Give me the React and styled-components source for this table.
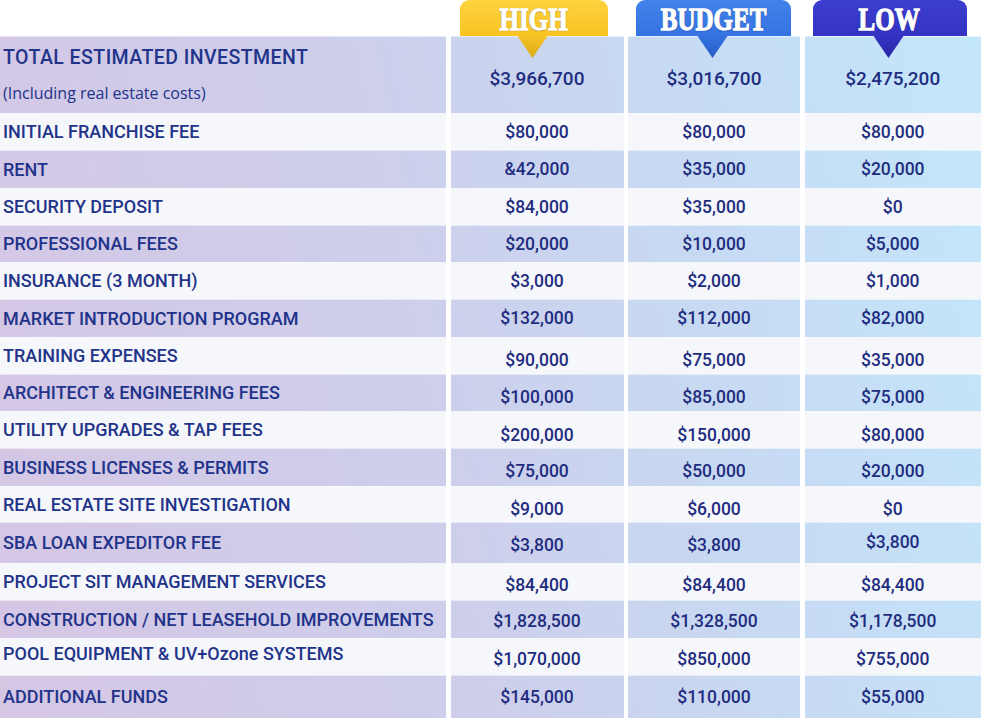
import React from 'react';
import styled, { createGlobalStyle, css } from 'styled-components';

const colors = {
  text: '#22338a',
  value: '#1f2d80',
  light: '#f6f7fa',
};

const columns = '446px 173px 172px 1fr';
const gutter = '4.5px';

const GlobalStyle = createGlobalStyle`
  html, body {
    margin: 0;
    padding: 0;
    background: #ffffff;
  }
  body {
    font-family: Roboto, "DejaVu Sans", sans-serif;
  }
`;

const shadedBg = css`
  background: linear-gradient(78deg, #d5c6e4 0%, #cdcfeb 45%, #c6dcf4 75%, #c3e7fb 100%) fixed;
`;

const Page = styled.div`
  width: 981px;
  height: 719px;
  overflow: hidden;
  background: #ffffff;
`;

const TabRow = styled.div`
  display: grid;
  grid-template-columns: ${columns};
  column-gap: ${gutter};
  height: 36px;
  position: relative;
  z-index: 2;
`;

const tabThemes = {
  high: { top: '#fed33f', bottom: '#f8c322', tipTop: '#f6c426', tipBottom: '#d9a816' },
  budget: { top: '#4282ea', bottom: '#3573e2', tipTop: '#3472df', tipBottom: '#285cc6' },
  low: { top: '#3c3ecf', bottom: '#3433c2', tipTop: '#3333c2', tipBottom: '#2927a6' },
};

const Tab = styled.div`
  position: relative;
  width: ${p => p.$width}px;
  margin-left: ${p => p.$offset}px;
  height: 36px;
  border-radius: 9px 9px 0 0;
  background: linear-gradient(180deg, ${p => tabThemes[p.$kind].top}, ${p => tabThemes[p.$kind].bottom});
  display: flex;
  align-items: center;
  justify-content: center;

  &::after {
    content: '';
    position: absolute;
    left: 50%;
    top: 36px;
    width: 30px;
    height: 22px;
    margin-left: -16px;
    clip-path: polygon(0 0, 100% 0, 50% 100%);
    background: linear-gradient(180deg, ${p => tabThemes[p.$kind].tipTop}, ${p => tabThemes[p.$kind].tipBottom});
  }
`;

const TabLabel = styled.span`
  display: inline-block;
  font-family: "Liberation Serif", "DejaVu Serif", serif;
  font-weight: 700;
  font-size: 32px;
  line-height: 36px;
  color: #ffffff;
  transform: scaleX(0.78);
  -webkit-text-stroke: 1.3px #ffffff;
  text-shadow: 0 0 1.5px rgba(20, 20, 60, 0.7), 0 1px 1px rgba(20, 20, 60, 0.4);
  margin-top: 1px;
  white-space: nowrap;
`;

const Table = styled.div`
  display: flex;
  flex-direction: column;
`;

const Row = styled.div`
  display: grid;
  grid-template-columns: ${columns};
  column-gap: ${gutter};
  height: ${p => p.$height}px;
  box-sizing: border-box;
`;

const Cell = styled.div`
  box-sizing: border-box;
  display: flex;
  align-items: center;
  ${p => (p.$shaded ? shadedBg : css`background: ${colors.light};`)}
  ${p => p.$shaded && css`box-shadow: inset 0 1px 0 rgba(255, 255, 255, 0.55);`}
`;

const LabelCell = styled(Cell)`
  padding-left: 3px;
  padding-top: ${p => Math.max(0, (p.$shift || 0) * 2)}px;
  padding-bottom: ${p => Math.max(0, -(p.$shift || 0) * 2)}px;
  font-size: 18px;
  font-weight: 500;
  letter-spacing: 0;
  color: ${colors.text};
  white-space: nowrap;
`;

const ValueCell = styled(Cell)`
  justify-content: center;
  padding-top: ${p => Math.max(0, (p.$shift || 0) * 2)}px;
  padding-bottom: ${p => Math.max(0, -(p.$shift || 0) * 2)}px;
  font-size: ${p => (p.$big ? 19 : 17.5)}px;
  font-weight: 500;
  color: ${colors.value};
  letter-spacing: 0;
`;

const HeaderLabel = styled(Cell)`
  flex-direction: column;
  align-items: flex-start;
  padding: 9px 0 0 3px;
  color: ${colors.text};
`;

const Title = styled.div`
  font-size: 19.5px;
  font-weight: 500;
  line-height: 26px;
  letter-spacing: 0.45px;
`;

const Subtitle = styled.div`
  font-family: "Open Sans", "Noto Sans", sans-serif;
  font-size: 16px;
  line-height: 20px;
  margin-top: 12px;
`;

const rows = [
  { label: 'INITIAL FRANCHISE FEE', values: ['$80,000', '$80,000', '$80,000'], h: 37 },
  { label: 'RENT', values: ['&42,000', '$35,000', '$20,000'], h: 38 },
  { label: 'SECURITY DEPOSIT', values: ['$84,000', '$35,000', '$0'], h: 37 },
  { label: 'PROFESSIONAL FEES', values: ['$20,000', '$10,000', '$5,000'], h: 37 },
  { label: 'INSURANCE (3 MONTH)', values: ['$3,000', '$2,000', '$1,000'], h: 37 },
  { label: 'MARKET INTRODUCTION PROGRAM', values: ['$132,000', '$112,000', '$82,000'], h: 38 },
  { label: 'TRAINING EXPENSES', values: ['$90,000', '$75,000', '$35,000'], h: 37, v: 4 },
  { label: 'ARCHITECT & ENGINEERING FEES', values: ['$100,000', '$85,000', '$75,000'], h: 37, v: 4 },
  { label: 'UTILITY UPGRADES & TAP FEES', values: ['$200,000', '$150,000', '$80,000'], h: 37, v: 5 },
  { label: 'BUSINESS LICENSES & PERMITS', values: ['$75,000', '$50,000', '$20,000'], h: 38, v: 4 },
  { label: 'REAL ESTATE SITE INVESTIGATION', values: ['$9,000', '$6,000', '$0'], h: 36, v: 5 },
  { label: 'SBA LOAN EXPEDITOR FEE', values: ['$3,800', '$3,800', '$3,800'], h: 41, v: [2, 2, -1] },
  { label: 'PROJECT SIT MANAGEMENT SERVICES', values: ['$84,400', '$84,400', '$84,400'], h: 37, v: 3 },
  { label: 'CONSTRUCTION / NET LEASEHOLD IMPROVEMENTS', values: ['$1,828,500', '$1,328,500', '$1,178,500'], h: 38, v: 2 },
  { label: 'POOL EQUIPMENT & UV+Ozone SYSTEMS', values: ['$1,070,000', '$850,000', '$755,000'], h: 37, l: -3, v: 2 },
  { label: 'ADDITIONAL FUNDS', values: ['$145,000', '$110,000', '$55,000'], h: 43 },
];

const tabs = [
  { kind: 'high', text: 'HIGH', width: 148, offset: 9 },
  { kind: 'budget', text: 'BUDGET', width: 155, offset: 8 },
  { kind: 'low', text: 'LOW', width: 154, offset: 8 },
];

const shiftFor = (v, i) => (Array.isArray(v) ? v[i] : v || 0);

export default function App() {
  return (
    <Page>
      <GlobalStyle />
      <TabRow>
        <div />
        {tabs.map(t => (
          <Tab key={t.kind} $kind={t.kind} $width={t.width} $offset={t.offset}>
            <TabLabel>{t.text}</TabLabel>
          </Tab>
        ))}
      </TabRow>
      <Table>
        <Row $height={77}>
          <HeaderLabel $shaded>
            <Title>TOTAL ESTIMATED INVESTMENT</Title>
            <Subtitle>(Including real estate costs)</Subtitle>
          </HeaderLabel>
          {['$3,966,700', '$3,016,700', '$2,475,200'].map(v => (
            <ValueCell key={v} $shaded $big $shift={4}>
              {v}
            </ValueCell>
          ))}
        </Row>
        {rows.map((r, idx) => {
          const shaded = idx % 2 === 1;
          return (
            <Row key={r.label} $height={r.h}>
              <LabelCell $shaded={shaded} $shift={r.l || 0}>
                {r.label}
              </LabelCell>
              {r.values.map((v, i) => (
                <ValueCell key={i} $shaded={shaded} $shift={shiftFor(r.v, i)}>
                  {v}
                </ValueCell>
              ))}
            </Row>
          );
        })}
      </Table>
    </Page>
  );
}
